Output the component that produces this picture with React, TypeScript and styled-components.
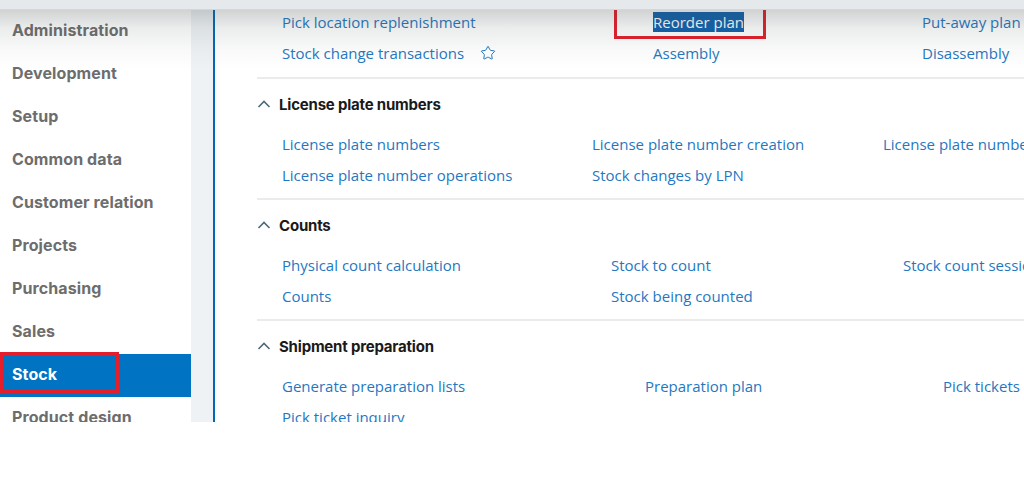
import React from "react";
import styled, { createGlobalStyle } from "styled-components";
import { Star } from "lucide-react";

const GlobalStyle = createGlobalStyle`
  html, body { margin: 0; padding: 0; background: #ffffff; }
  body { font-family: "Open Sans", "Liberation Sans", sans-serif; }
  * { box-sizing: border-box; }
`;

const Page = styled.div`
  display: flex;
  flex-direction: column;
  width: 1024px;
  height: 422px;
  overflow: hidden;
`;

const TopBar = styled.div`
  height: 10px;
  flex: none;
  background: #e5e9ec;
  border-bottom: 1px solid #d3d7d9;
`;

const Body = styled.div`
  position: relative;
  flex: 1;
  display: flex;
  min-height: 0;
  &::after {
    content: "";
    position: absolute;
    left: 0;
    right: 0;
    top: 0;
    height: 60px;
    pointer-events: none;
    background: linear-gradient(
      rgba(60, 70, 72, 0.24),
      rgba(60, 70, 72, 0.1) 18px,
      rgba(60, 70, 72, 0.03) 40px,
      rgba(60, 70, 72, 0) 60px
    );
  }
`;

const Sidebar = styled.nav`
  width: 191px;
  flex: none;
  display: flex;
  flex-direction: column;
  background: #ffffff;
`;

const NavItem = styled.div<{ $active?: boolean }>`
  position: relative;
  height: 43px;
  flex: none;
  display: flex;
  align-items: center;
  padding: 0 0 3px 12px;
  font-family: Inter, Roboto, "Liberation Sans", sans-serif;
  font-weight: 700;
  font-size: 16px;
  letter-spacing: 0.1px;
  color: ${(p) => (p.$active ? "#ffffff" : "#6d6d6d")};
  background: ${(p) => (p.$active ? "#0073c2" : "transparent")};
  white-space: nowrap;
`;

const RedBox = styled.span<{ $l: number; $t: number; $w: number; $h: number }>`
  position: absolute;
  left: ${(p) => p.$l}px;
  top: ${(p) => p.$t}px;
  width: ${(p) => p.$w}px;
  height: ${(p) => p.$h}px;
  border: 3px solid #e41e2b;
  pointer-events: none;
`;

const Gutter = styled.div`
  width: 22px;
  flex: none;
  background: #eef2f4;
`;

const Content = styled.main`
  flex: 1;
  min-width: 0;
  border-left: 2px solid #0068b5;
  padding-left: 42px;
  overflow: hidden;
  background: #ffffff;
`;

const Section = styled.section<{ $first?: boolean }>`
  border-top: ${(p) => (p.$first ? "none" : "2px solid #e9ebed")};
  padding-bottom: ${(p) => (p.$first ? "9px" : "8px")};
`;

const SectionHeader = styled.h3`
  margin: 15px 0 0 0;
  height: 20px;
  display: flex;
  align-items: center;
  gap: 8px;
  font-family: Inter, Roboto, "Liberation Sans", sans-serif;
  font-weight: 700;
  font-size: 15px;
  letter-spacing: -0.2px;
  color: #1a1a1a;
  white-space: nowrap;
`;

const Chevron = styled.svg`
  width: 14px;
  height: 14px;
  flex: none;
`;

const LinkGrid = styled.div<{ $cols: string; $first?: boolean }>`
  display: grid;
  grid-template-columns: ${(p) => p.$cols};
  grid-auto-rows: 31px;
  margin-top: ${(p) => (p.$first ? "-4px" : "14px")};
  padding-left: 25px;
`;

const Cell = styled.div`
  display: flex;
  align-items: center;
  white-space: nowrap;
`;

const LinkText = styled.span<{ $selected?: boolean }>`
  position: relative;
  font-family: "Open Sans", "Liberation Sans", sans-serif;
  font-size: 15px;
  line-height: 20px;
  color: ${(p) => (p.$selected ? "#ffffff" : "#1f78c1")};
  background: ${(p) => (p.$selected ? "#1062ad" : "transparent")};
`;

const StarWrap = styled.span`
  display: inline-flex;
  margin-left: 16px;
  color: #1f78c1;
`;

type LinkDef = { text: string; star?: boolean; selected?: boolean };

type SectionDef = {
  title?: string;
  cols: string;
  links: (LinkDef | null)[];
};

const sections: SectionDef[] = [
  {
    cols: "371px 269px auto",
    links: [
      { text: "Pick location replenishment" },
      { text: "Reorder plan", selected: true },
      { text: "Put-away plan" },
      { text: "Stock change transactions", star: true },
      { text: "Assembly" },
      { text: "Disassembly" },
    ],
  },
  {
    title: "License plate numbers",
    cols: "310px 291px auto",
    links: [
      { text: "License plate numbers" },
      { text: "License plate number creation" },
      { text: "License plate number inquiry" },
      { text: "License plate number operations" },
      { text: "Stock changes by LPN" },
      null,
    ],
  },
  {
    title: "Counts",
    cols: "329px 292px auto",
    links: [
      { text: "Physical count calculation" },
      { text: "Stock to count" },
      { text: "Stock count sessions" },
      { text: "Counts" },
      { text: "Stock being counted" },
      null,
    ],
  },
  {
    title: "Shipment preparation",
    cols: "363px 298px auto",
    links: [
      { text: "Generate preparation lists" },
      { text: "Preparation plan" },
      { text: "Pick tickets" },
      { text: "Pick ticket inquiry" },
      null,
      null,
    ],
  },
];

const navItems = [
  "Administration",
  "Development",
  "Setup",
  "Common data",
  "Customer relation",
  "Projects",
  "Purchasing",
  "Sales",
  "Stock",
  "Product design",
];

export default function App() {
  return (
    <>
      <GlobalStyle />
      <Page>
        <TopBar />
        <Body>
          <Sidebar>
            {navItems.map((n) => (
              <NavItem key={n} $active={n === "Stock"}>
                {n}
                {n === "Stock" && <RedBox $l={0} $t={-2} $w={119} $h={41} />}
              </NavItem>
            ))}
          </Sidebar>
          <Gutter />
          <Content>
            {sections.map((s, i) => (
              <Section key={i} $first={i === 0}>
                {s.title && (
                  <SectionHeader>
                    <Chevron viewBox="0 0 14 14">
                      <path
                        d="M1.5 10 L7 4.5 L12.5 10"
                        fill="none"
                        stroke="#4d6a7a"
                        strokeWidth="1.6"
                      />
                    </Chevron>
                    {s.title}
                  </SectionHeader>
                )}
                <LinkGrid $cols={s.cols} $first={i === 0}>
                  {s.links.map((l, j) => (
                    <Cell key={j}>
                      {l && (
                        <>
                          <LinkText $selected={l.selected}>
                            {l.text}
                            {l.selected && (
                              <RedBox $l={-39} $t={-5} $w={152} $h={32} />
                            )}
                          </LinkText>
                          {l.star && (
                            <StarWrap>
                              <Star size={16} strokeWidth={1.5} />
                            </StarWrap>
                          )}
                        </>
                      )}
                    </Cell>
                  ))}
                </LinkGrid>
              </Section>
            ))}
          </Content>
        </Body>
      </Page>
    </>
  );
}
